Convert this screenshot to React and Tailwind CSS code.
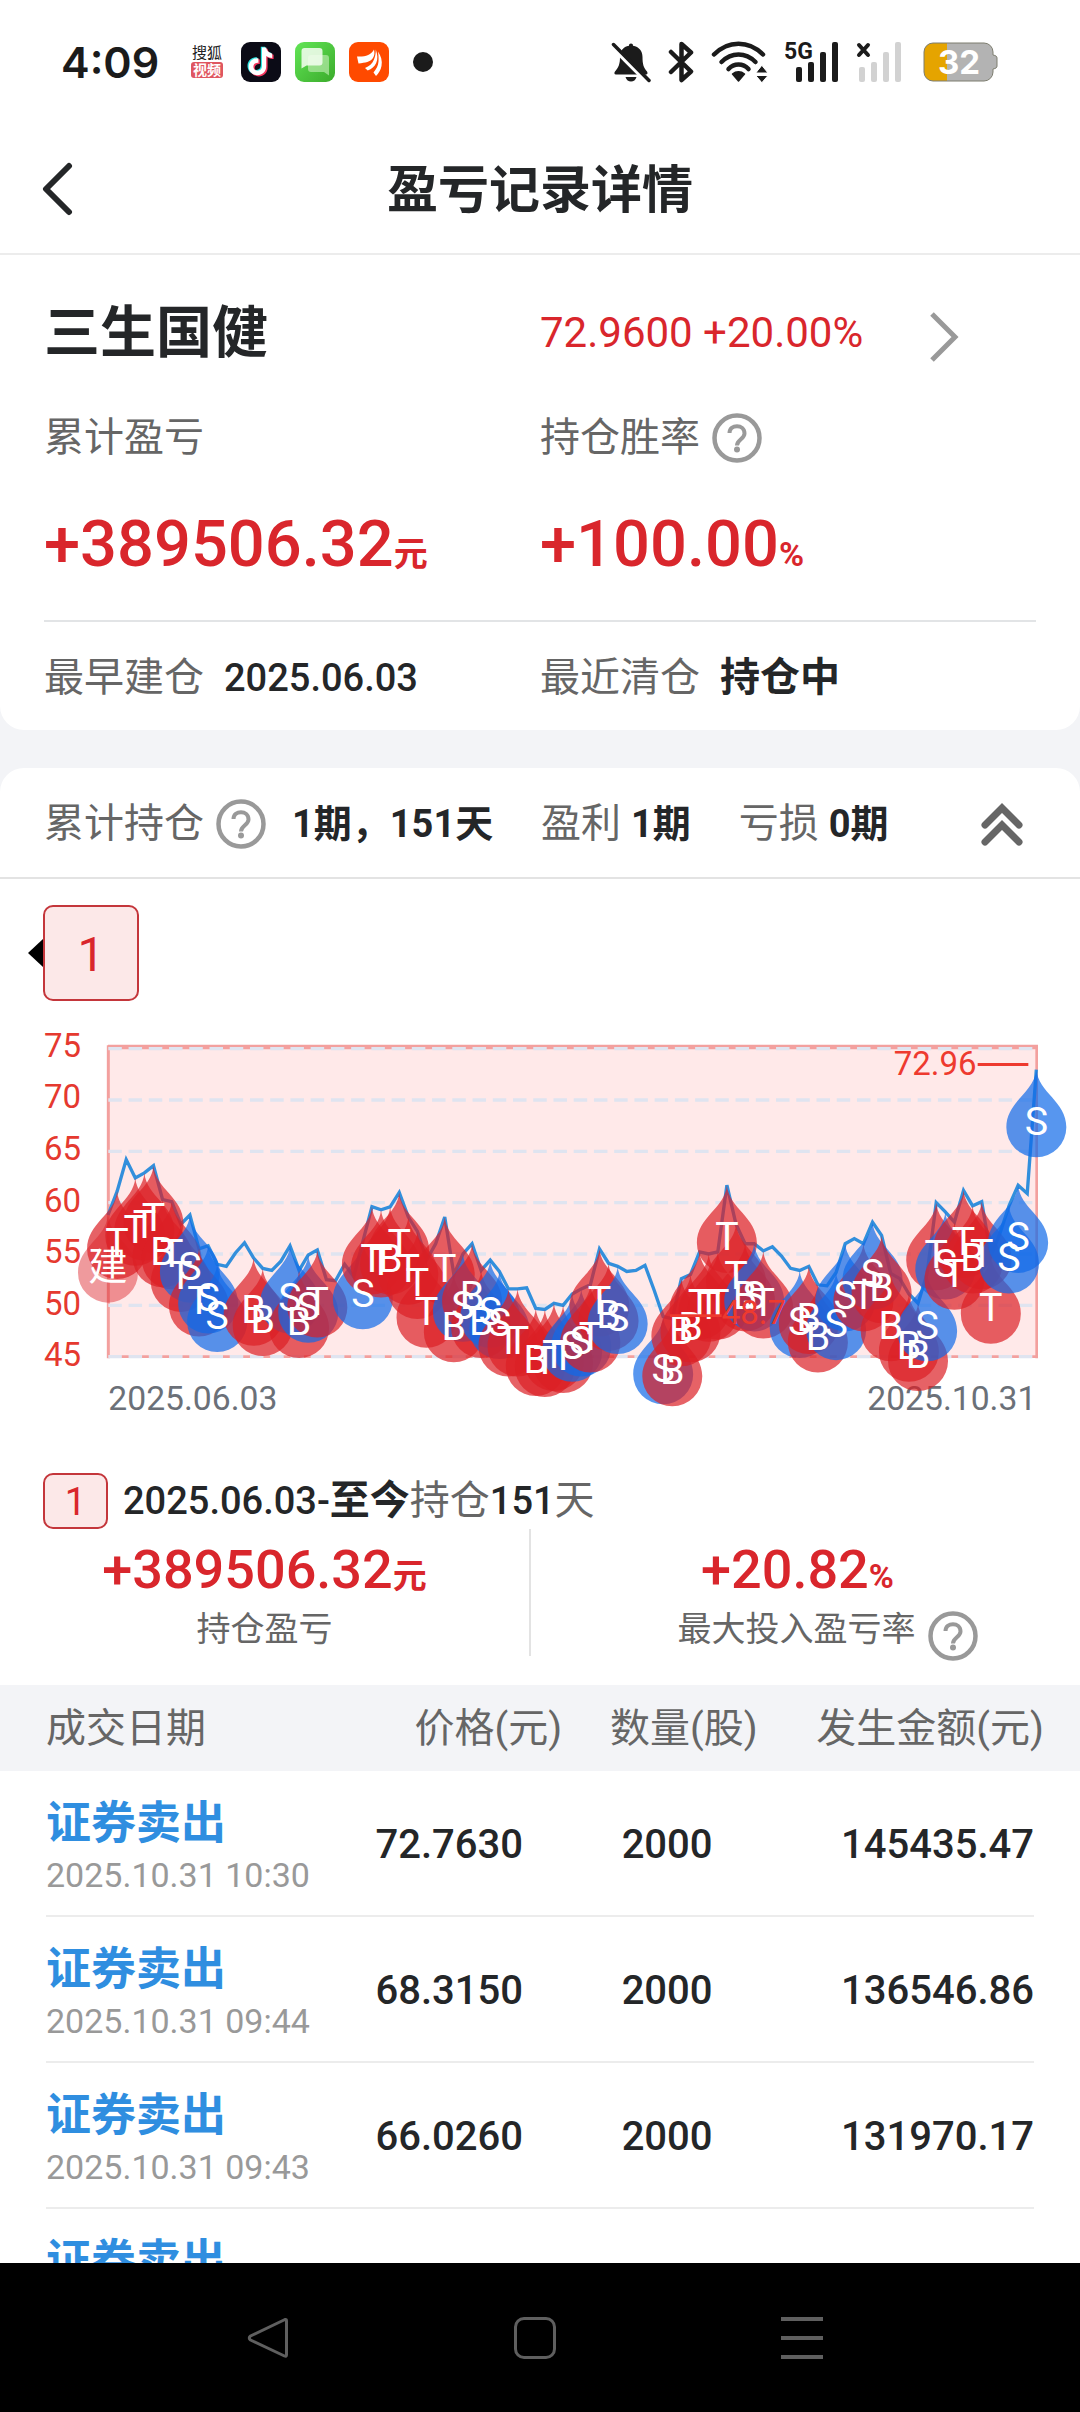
import React from "react";

const INK = "#1b1b1b";

/* ---------- status bar ---------- */

function VideoAppIcon() {
  return (
    <svg width="34" height="50" viewBox="-1 -8 34 50" aria-hidden="true">
      <rect x="0" y="17" width="32" height="16" rx="3" fill="#df5660" />
      <text x="16" y="13" textAnchor="middle" fontSize="15" fill="#222" fontFamily="Noto Sans CJK SC, sans-serif">搜狐</text>
      <text x="16" y="30" textAnchor="middle" fontSize="14" fontWeight="700" fill="#fff" fontFamily="Noto Sans CJK SC, sans-serif">视频</text>
    </svg>
  );
}

function MusicAppIcon() {
  const note = "M20.5 5.5h4.2c.5 3.4 2.6 5.6 6 6v4.4c-2.3 0-4.3-.7-6-1.9v10.2c0 5.3-4 9-8.8 9s-8.7-3.700-8.700-8.500c0-5.200 4.400-9 9.700-8.500v4.700c-2.700-.4-5 1.300-5 3.800 0 2.300 1.900 4 4.200 4 2.500 0 4.400-1.700 4.400-4.600z";
  return (
    <svg width="40" height="40" viewBox="0 0 40 40" aria-hidden="true">
      <rect width="40" height="40" rx="9" fill="#0b0b16" />
      <path d={note} transform="translate(-.7 -.8)" fill="#2ce5e4" />
      <path d={note} transform="translate(1.900 1.200)" fill="#f4365f" />
      <path d={note} transform="translate(.5 0)" fill="#fff" />
    </svg>
  );
}

function ChatAppIcon() {
  return (
    <svg width="40" height="40" viewBox="0 0 40 40" aria-hidden="true">
      <defs>
        <linearGradient id="chatBg" x1="0" y1="0" x2="1" y2="1">
          <stop offset="0" stopColor="#62e556" />
          <stop offset="1" stopColor="#3bab2b" />
        </linearGradient>
      </defs>
      <rect width="40" height="40" rx="9" fill="url(#chatBg)" />
      <path d="M16 13h15a3 3 0 0 1 3 3v17.500l-5-3.500H16a3 3 0 0 1-3-3V16a3 3 0 0 1 3-3z" fill="#b6eaa9" opacity=".7" />
      <path d="M9.500 6h15a3 3 0 0 1 3 3v11.500a3 3 0 0 1-3 3H11.500l-5 3V9a3 3 0 0 1 3-3z" fill="#f2fdef" opacity=".88" />
    </svg>
  );
}

function StockAppIcon() {
  return (
    <svg width="40" height="40" viewBox="0 0 40 40" aria-hidden="true">
      <rect width="40" height="40" rx="9" fill="#ff4a00" />
      <g fill="#fff">
        <path d="M29 9.500c3 4.500 4.500 9.500 3.500 14.500-.7 4-3 7.500-5.500 10l-2.500-3.500c3-3.500 4.700-7 5-11 .3-3.500-.1-7-.5-10z" />
        <path d="M26.800 7.500c1.800 5 2.200 9.500.4 13.500-1.600 3.700-4.500 6-8.500 7.500l-2.700-2.500c4.300-1.800 7.300-4.300 8.900-8.200 1.400-3.500 1.900-6.500 1.900-10.300z" />
        <path d="M25 7.500c.8 3.300.6 6.300-1.200 8.800-2.500 3.600-7.300 4.500-14.300 5.200L8 14.500c7.500.5 14-1 17-7z" />
      </g>
    </svg>
  );
}

function BellOffIcon() {
  return (
    <svg width="40" height="41" viewBox="0 0 40 41" aria-hidden="true">
      <path d="M20 1.500c1.300 0 2 .9 2 2.200 6 1 9.500 5.200 9.500 11.300 0 7 1 10.500 4.500 14.500.8 1 .8 3-1 3H5c-1.800 0-2-1.700-1-3 3.500-4 5-7.500 5-14.500 0-6 3-10.300 9-11.300 0-1.300.7-2.200 2-2.200z" fill={INK} />
      <path d="M14.500 35h11c-.8 3-3 4.500-5.500 4.500s-4.700-1.500-5.500-4.500z" fill={INK} />
      <path d="M4 -1l38 38" stroke="#fff" strokeWidth="4" transform="translate(-4.500 4.500)" />
      <path d="M2.500 2.500l35.500 36" stroke={INK} strokeWidth="3.500" strokeLinecap="round" />
    </svg>
  );
}

function BluetoothIcon() {
  return (
    <svg width="26" height="42" viewBox="0 0 26 42" fill="none" stroke={INK} strokeWidth="4.500" strokeLinejoin="round" strokeLinecap="round" aria-hidden="true">
      <path d="M3 11l20 19.500-9.500 8.500V3L23 11.500 3 31" />
    </svg>
  );
}

function WifiIcon() {
  return (
    <svg width="57" height="42" viewBox="0 0 57 42" fill="none" stroke={INK} strokeWidth="4.500" strokeLinecap="round" aria-hidden="true">
      <path d="M3 13.500C17-1 38-1 52 13.500" />
      <path d="M10.500 21c10-10 24-10 34 0" />
      <path d="M17.500 28c5.500-6 14.500-6 20 0" />
      <path d="M21.500 33c3.500-3 8.500-3 12 0l-6 7z" fill={INK} strokeWidth="1.500" strokeLinejoin="round" />
      <path d="M51 24.500l6 7.500h-12zM51 41.500l6-7h-12z" fill={INK} stroke="#fff" strokeWidth="1" />
    </svg>
  );
}

function SignalIcon() {
  return (
    <svg width="54" height="58" viewBox="0 -8 54 58" fill={INK} aria-hidden="true">
      <text x="-1" y="18" fontSize="23" fontWeight="700" fontFamily="Roboto, sans-serif">5G</text>
      <rect x="11" y="26" width="6" height="15" rx="2" />
      <rect x="23" y="21" width="6" height="20" rx="2" />
      <rect x="35" y="11" width="6" height="30" rx="2" />
      <rect x="47" y="1" width="6" height="40" rx="2" />
    </svg>
  );
}

function NoSignalIcon() {
  return (
    <svg width="46" height="42" viewBox="0 0 46 42" fill="#d2d2d2" aria-hidden="true">
      <path d="M3 4l9 10M12 4L3 14" stroke={INK} strokeWidth="4" strokeLinecap="round" />
      <rect x="3" y="26" width="6" height="15" rx="2" />
      <rect x="15" y="21" width="6" height="20" rx="2" />
      <rect x="27" y="11" width="6" height="30" rx="2" />
      <rect x="39" y="1" width="6" height="40" rx="2" />
    </svg>
  );
}

function BatteryIcon() {
  const shell = "M10 1h51a9 9 0 0 1 9 9v3c3 .5 4 1.500 4 3v8c0 1.500-1 2.500-4 3v3a9 9 0 0 1-9 9H10a9 9 0 0 1-9-9V10a9 9 0 0 1 9-9z";
  return (
    <svg width="75" height="40" viewBox="0 0 75 40" aria-hidden="true">
      <defs>
        <clipPath id="charge"><rect width="24" height="40" /></clipPath>
      </defs>
      <path d={shell} fill="#b3b3b3" />
      <path d={shell} fill="#e5a400" clipPath="url(#charge)" />
      <path d={shell} fill="none" stroke="#7d7d6f" strokeWidth="1" />
      <text x="36" y="32" textAnchor="middle" fontSize="33" fontWeight="700" fill="#fff" fontFamily="Inter, sans-serif">32</text>
    </svg>
  );
}

function StatusBar() {
  return (
    <div className="flex h-[124px] shrink-0 items-center justify-between pl-[61px] pr-[82px]">
      <div className="flex items-center">
        <span className="mr-[31px] font-[Inter,sans-serif] text-[43px] font-semibold leading-none text-[#1b1b1b]">4:09</span>
        <div className="flex items-center gap-[14px]">
          <span className="mr-[3px] flex"><VideoAppIcon /></span>
          <MusicAppIcon />
          <ChatAppIcon />
          <StockAppIcon />
          <span className="ml-[10px] size-5 rounded-full bg-[#1b1b1b]" />
        </div>
      </div>
      <div className="flex items-center gap-[17px]">
        <BellOffIcon />
        <BluetoothIcon />
        <WifiIcon />
        <SignalIcon />
        <NoSignalIcon />
        <span className="ml-1 flex"><BatteryIcon /></span>
      </div>
    </div>
  );
}

/* ---------- shared pieces ---------- */

function HelpButton({ label }) {
  return (
    <button type="button" aria-label={label} className="flex shrink-0">
      <svg width="50" height="50" viewBox="0 0 50 50" fill="none" stroke="#999" aria-hidden="true">
        <circle cx="25" cy="25" r="22.500" strokeWidth="4.500" />
        <path d="M17.500 20c0-9 15-9.500 15 .500 0 5.500-7.500 6-7.500 12" strokeWidth="4" />
        <circle cx="25" cy="36.500" r="3" fill="#999" stroke="none" />
      </svg>
    </button>
  );
}

/* ---------- price chart ---------- */

const DAYS = 103;
const X0 = 324;
const X1 = 3109;
const STEP = (X1 - X0) / (DAYS - 1);
const TOP = 86;
const UNIT = 154 / 5;
const yOf = (price) => TOP + (75 - price) * UNIT;
const xOf = (day) => X0 + STEP * day;

const PRICES = [
  58.8, 61.1, 64.2, 62.4, 62.9, 63.6, 60.3, 60.1, 57.9, 58.8, 55.5, 55.8, 54.0, 53.8,
  55.1, 56.1, 54.6, 53.6, 53.4, 54.3, 55.8, 53.4, 54.9, 55.4, 52.5, 52.4, 54.0, 52.8,
  56.2, 59.6, 59.3, 59.6, 61.0, 58.6, 57.2, 54.4, 56.0, 58.6, 53.0, 55.0, 56.0, 53.4,
  54.4, 53.3, 51.6, 51.6, 51.7, 49.7, 49.6, 50.2, 50.0, 51.1, 51.6, 52.0, 55.5, 54.1,
  53.8, 53.3, 53.4, 53.9, 51.5, 48.9, 48.7, 52.6, 53.0, 55.2, 55.0, 55.2, 61.7, 57.9,
  56.0, 56.0, 55.3, 55.7, 54.8, 53.6, 53.4, 53.8, 52.0, 51.9, 53.2, 56.0, 56.5, 56.0,
  58.1, 56.8, 53.1, 52.6, 51.1, 50.2, 53.1, 60.0, 59.1, 58.1, 61.2, 59.7, 60.1, 54.8,
  57.0, 59.7, 61.7, 60.9, 72.96,
];

const TRADES = [
  [0, "建"], [1, "T"], [3, "T"], [4, "T"], [5, "T"], [6, "B"], [7, "T"], [8, "T"], [9, "S"], [10, "T"], [11, "S"],
  [12, "S"], [16, "B"], [17, "B"], [20, "S"], [21, "B"], [22, "S"], [23, "T"], [28, "S"], [29, "T"], [30, "T"],
  [31, "B"], [32, "T"], [33, "T"], [34, "T"], [35, "T"], [37, "T"], [38, "B"], [39, "S"], [40, "B"], [41, "B"],
  [42, "S"], [43, "S"], [44, "T"], [45, "T"], [47, "B"], [48, "T"], [49, "T"], [50, "T"], [51, "S"], [52, "S"],
  [53, "T"], [54, "T"], [55, "B"], [56, "S"], [61, "S"], [62, "B"], [63, "B"], [64, "B"], [65, "T"], [66, "T"],
  [67, "T"], [68, "T"], [69, "T"], [70, "B"], [71, "S"], [72, "T"], [76, "S"], [77, "B"], [78, "B"], [80, "S"],
  [81, "S"], [83, "T"], [84, "S"], [85, "B"], [86, "B"], [88, "B"], [89, "B"], [90, "S"], [91, "T"], [92, "S"],
  [93, "T"], [94, "T"], [95, "B"], [96, "T"], [97, "T"], [99, "S"], [100, "S"], [102, "S"],
];

const PIN = "M0 0C6 70 90 95 90 173A90 90 0 0 1-90 173C-90 95-6 70 0 0Z";
const PIN_FILL = {
  建: ["#dc2025", 0.45],
  T: ["#dc2025", 0.7],
  B: ["#dc2025", 0.7],
  S: ["#0f6ae8", 0.7],
};

function PriceChart() {
  const grid = [75, 70, 65, 60, 55, 50, 45];
  const line = PRICES.map((p, i) => `${xOf(i)},${yOf(p)}`).join(" ");
  return (
    <svg viewBox="0 0 3240 1260" className="block w-full" role="img" aria-label="股价走势与买卖点" fontFamily="Roboto, Noto Sans CJK SC, sans-serif">
      <rect x={X0} y="78" width={X1 - X0} height={yOf(45) - 78} fill="#ffe9e9" />
      <path d={`M${X0} 78H${X1 + 1}V1015M${X0} 84H${X1}M${X0} ${yOf(45)}H${X1}`} fill="none" stroke="#f3a09e" strokeWidth="8" />
      <path d={`M${X0 + 1} 76V1015`} fill="none" stroke="#f3a09e" strokeWidth="9" />
      {grid.map((g) => (
        <line key={g} x1={X0 + 1} x2={X1 - 8} y1={yOf(g)} y2={yOf(g)} stroke="#dfe4f0" strokeWidth="10" strokeDasharray="40.500 20.200" />
      ))}
      <g fill="#e5392f" fontSize="99" textAnchor="end">
        {grid.map((g) => (
          <text key={g} x="243" y={yOf(g) + 24 + (75 - g) / 6}>{g}</text>
        ))}
      </g>
      <g fill="#6b7078" fontSize="101">
        <text x="325" y="1171">2025.06.03</text>
        <text x="3109" y="1171" textAnchor="end">2025.10.31</text>
      </g>
      <polyline points={line} fill="none" stroke="#328fdc" strokeWidth="10" strokeLinejoin="miter" />
      {TRADES.map(([day, kind]) => (
        <path
          key={day}
          d={PIN}
          transform={`translate(${xOf(day)} ${yOf(PRICES[day])})`}
          fill={PIN_FILL[kind][0]}
          fillOpacity={PIN_FILL[kind][1]}
        />
      ))}
      <g fill="#fff" fontSize="118" textAnchor="middle">
        {TRADES.map(([day, kind]) => (
          <text key={day} x={xOf(day)} y={yOf(PRICES[day]) + 195}>{kind}</text>
        ))}
      </g>
      <g fill="#ee3a2f" stroke="none" fontSize="99">
        <text x="2930" y="164" textAnchor="end">72.96</text>
        <path d="M2933 129H3085V138H2933Z" />
        <path d="M2010 883H2165V891H2010Z" />
        <text x="2165" y="913">48.7</text>
      </g>
    </svg>
  );
}

/* ---------- page sections ---------- */

function Header() {
  return (
    <header className="grid h-[131px] shrink-0 grid-cols-[1fr_auto_1fr] items-center border-b-2 border-[#ececec] px-[42px]">
      <button type="button" aria-label="返回" className="flex w-fit">
        <svg width="32" height="54" viewBox="0 0 32 54" fill="none" stroke="#242628" strokeWidth="6" strokeLinecap="round" strokeLinejoin="round" aria-hidden="true">
          <path d="M27 4L4 27l23 23" />
        </svg>
      </button>
      <h1 className="pt-1 text-[51px] font-bold leading-none text-[#242628]">盈亏记录详情</h1>
    </header>
  );
}

function Summary() {
  return (
    <section className="rounded-b-3xl bg-white px-[44px] pb-[27px] pt-12">
      <div className="grid h-[60px] grid-cols-2 items-center">
        <h2 className="text-[56px] font-bold leading-none">三生国健</h2>
        <a href="#quote" aria-label="查看行情" className="flex items-center gap-[66px] text-[42px] leading-none text-[#d9262c]">
          <span>72.9600 +20.00%</span>
          <svg width="30" height="58" viewBox="0 -8 30 58" fill="none" stroke="#999" strokeWidth="5" aria-hidden="true">
            <path d="M3 2l23 23L3 48" />
          </svg>
        </a>
      </div>
      <div className="mt-[50px] grid h-[50px] grid-cols-2 items-center text-[40px] leading-none text-[#666]">
        <span>累计盈亏</span>
        <span className="flex items-center gap-3">持仓胜率 <HelpButton label="持仓胜率说明" /></span>
      </div>
      <div className="mt-[49px] grid h-[60px] grid-cols-2 items-center text-[65px] font-medium leading-none text-[#d9262c]">
        <p>+389506.32<b className="text-[34px]">元</b></p>
        <p>+100.00<b className="text-[34px]">%</b></p>
      </div>
      <div className="mt-12 grid grid-cols-2 border-t-2 border-[#e2e4e6] pt-[31px] text-[40px] leading-[50px] text-[#666]">
        <p className="flex items-center gap-5">最早建仓 <span className="text-[38px] font-medium text-[#242628]">2025.06.03</span></p>
        <p className="flex items-center gap-5">最近清仓 <b className="text-[#242628]">持仓中</b></p>
      </div>
    </section>
  );
}

function HoldingBar() {
  return (
    <div className="flex h-[111px] items-center border-b-2 border-[#e3e3e3] pl-[44px] pr-14 pt-0.5 text-[40px] leading-[50px] text-[#666]">
      <div className="flex w-[497px] items-center">
        <span>累计持仓</span>
        <span className="ml-3 flex"><HelpButton label="累计持仓说明" /></span>
        <b className="ml-[26px] text-[38px] text-[#242628]">1期，151天</b>
      </div>
      <div className="flex flex-1 items-center gap-12">
        <span>盈利 <b className="text-[38px] text-[#242628]">1期</b></span>
        <span>亏损 <b className="text-[38px] text-[#242628]">0期</b></span>
      </div>
      <button type="button" aria-label="收起" className="flex">
        <svg width="44" height="44" viewBox="0 0 44 44" fill="none" stroke="#666" strokeWidth="7" strokeLinecap="round" aria-hidden="true">
          <path d="M5 23L22 6l17 17M5 40l17-17 17 17" />
        </svg>
      </button>
    </div>
  );
}

function PeriodPicker() {
  return (
    <div className="flex items-center pb-[19px] pl-7 pt-[26px]">
      <svg width="15" height="28" viewBox="0 0 15 28" aria-hidden="true"><path d="M15 0v28L0 14z" /></svg>
      <button type="button" className="size-24 rounded-[10px] border-2 border-[#c4363b] bg-[#fce8e8] pt-1 text-[48px] leading-none text-[#d9262c]">1</button>
    </div>
  );
}

function PeriodSummary() {
  return (
    <div className="pt-[33px]">
      <p className="flex h-14 items-center pl-[43px] text-[38px] font-medium leading-none text-[#242628]">
        <span className="mr-[15px] flex h-14 w-[65px] items-center justify-center rounded-[10px] border-2 border-[#c4363b] bg-[#fce8e8] pt-0.5 font-normal text-[#d9262c]">1</span>
        <span>
          2025.06.03-<b className="text-[40px]">至今</b>
          <span className="text-[40px] font-normal text-[#666]">持仓</span>151
          <span className="text-[40px] font-normal text-[#666]">天</span>
        </span>
      </p>
      <div className="grid grid-cols-[531fr_549fr] text-center">
        <div className="h-[127px] border-r-2 border-[#e3e3e3] pt-[13px]">
          <p className="text-[54px] font-medium leading-[56px] text-[#d9262c]">+389506.32<b className="text-[34px]">元</b></p>
          <p className="text-[34px] leading-[50px] text-[#666]">持仓盈亏</p>
        </div>
        <div className="h-[127px] pr-4 pt-[13px]">
          <p className="text-[54px] font-medium leading-[56px] text-[#d9262c]">+20.82<b className="text-[34px]">%</b></p>
          <p className="flex justify-center gap-3 pl-[60px] text-[34px] leading-[50px] text-[#666]">
            最大投入盈亏率
            <span className="pt-[7px]"><HelpButton label="最大投入盈亏率说明" /></span>
          </p>
        </div>
      </div>
    </div>
  );
}

const RECORDS = [
  { type: "证券卖出", time: "2025.10.31 10:30", price: "72.7630", count: "2000", amount: "145435.47" },
  { type: "证券卖出", time: "2025.10.31 09:44", price: "68.3150", count: "2000", amount: "136546.86" },
  { type: "证券卖出", time: "2025.10.31 09:43", price: "66.0260", count: "2000", amount: "131970.17" },
  { type: "证券卖出" },
];

function RecordTable() {
  return (
    <table className="mt-[29px] block w-full text-[40px]">
      <thead className="block bg-[#f3f4f7] text-[#666]">
        <tr className="grid h-[86px] grid-cols-[32fr_20fr_19fr_28fr] items-center pl-[46px] pr-9 pt-0.5 leading-[50px]">
          <th scope="col" className="text-left font-normal">成交日期</th>
          <th scope="col" className="pr-2 text-right font-normal">价格(元)</th>
          <th scope="col" className="pr-1 text-right font-normal">数量(股)</th>
          <th scope="col" className="text-right font-normal">发生金额(元)</th>
        </tr>
      </thead>
      <tbody className="block px-[46px] font-medium text-[#242628]">
        {RECORDS.map((r, i) => (
          <tr key={i} className="grid h-[146px] grid-cols-[32fr_20fr_19fr_28fr] items-center border-b-2 border-[#ececec] pt-1">
            <td className="pt-2">
              <a href="#record" className="block text-[45px] font-bold leading-[52px] text-[#2f8ee0]">{r.type}</a>
              <span className="block h-[50px] whitespace-nowrap text-[34px] font-normal leading-[50px] text-[#999]">{r.time}</span>
            </td>
            <td className="pr-[42px] text-right">{r.price}</td>
            <td className="pr-[42px] text-right">{r.count}</td>
            <td className="text-right">{r.amount}</td>
          </tr>
        ))}
      </tbody>
    </table>
  );
}

function NavBar() {
  return (
    <nav className="flex h-[149px] shrink-0 items-center justify-between bg-black pl-[247px] pr-[257px]">
      <button type="button" aria-label="后退">
        <svg width="42" height="42" viewBox="0 0 42 42" fill="none" stroke="#5f5f5f" strokeWidth="3" strokeLinejoin="round" aria-hidden="true">
          <path d="M38 2.500Q39.500 2 39.500 4V38Q39.500 40 37.500 39L3.500 23Q1 21 3.500 19Z" />
        </svg>
      </button>
      <button type="button" aria-label="主屏幕" className="size-[42px] rounded-[10px] border-[3px] border-[#5f5f5f]" />
      <button type="button" aria-label="菜单">
        <svg width="42" height="42" viewBox="0 0 42 42" stroke="#5f5f5f" strokeWidth="4" aria-hidden="true">
          <path d="M0 2h42M0 21h42M0 40h42" />
        </svg>
      </button>
    </nav>
  );
}

export default function App() {
  return (
    <div className="flex h-dvh flex-col bg-white font-[Roboto,'Noto_Sans_CJK_SC',sans-serif] text-[#242628]">
      <StatusBar />
      <Header />
      <main className="min-h-0 flex-1 overflow-y-auto bg-[#f3f4f7] [scrollbar-width:none]">
        <Summary />
        <section className="mt-[38px] rounded-t-3xl bg-white">
          <HoldingBar />
          <PeriodPicker />
          <PriceChart />
          <PeriodSummary />
          <RecordTable />
        </section>
      </main>
      <NavBar />
    </div>
  );
}
